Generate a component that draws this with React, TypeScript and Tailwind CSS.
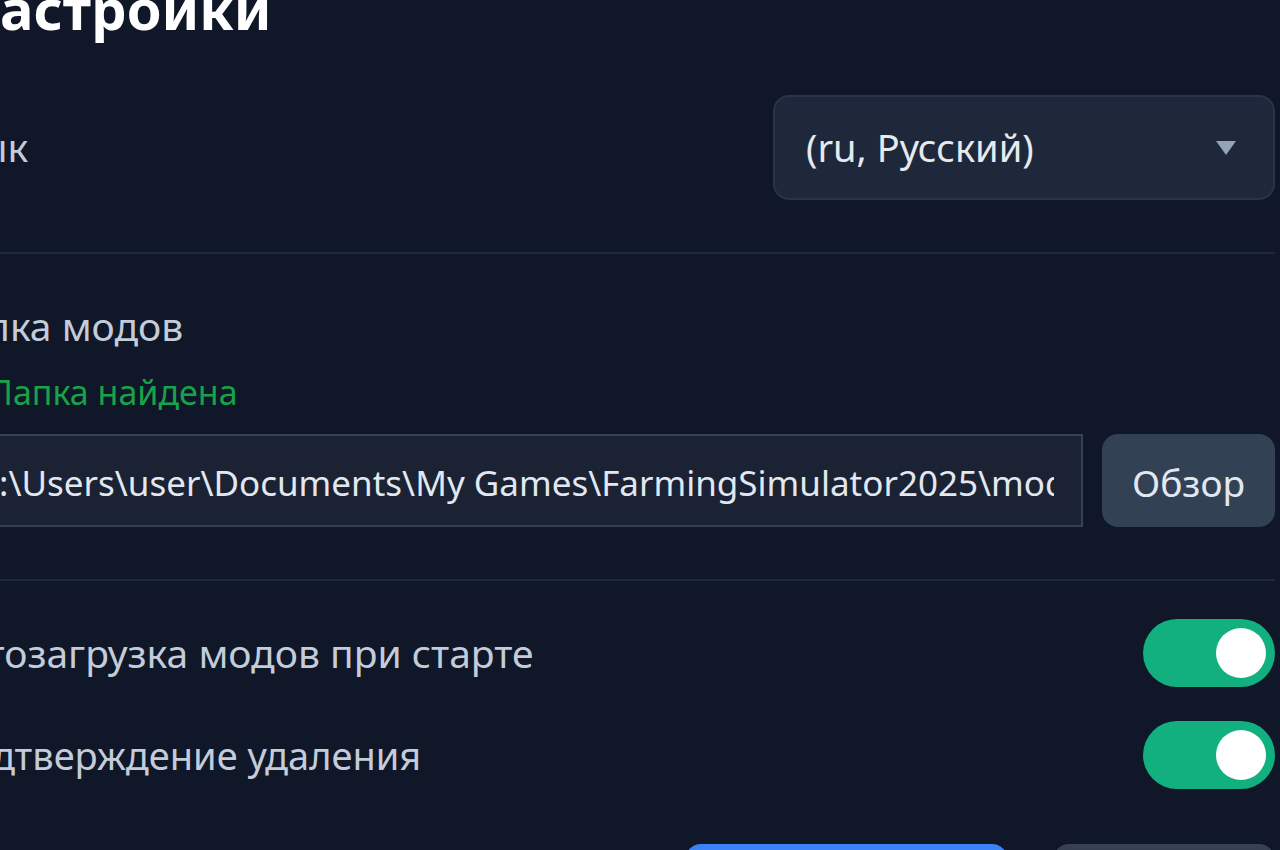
import { useState } from 'react';

const Toggle = ({ on, onChange }: { on: boolean; onChange: () => void }) => (
  <button
    onClick={onChange}
    className={`w-[132px] h-[68px] rounded-full flex items-center px-[9px] ${
      on ? 'bg-[#12b07e] justify-end' : 'bg-[#334155] justify-start'
    }`}
  >
    <span className="w-[50px] h-[50px] rounded-full bg-white" />
  </button>
);

const App = () => {
  const [autoLoad, setAutoLoad] = useState(true);
  const [confirmDelete, setConfirmDelete] = useState(true);

  return (
    <div
      className="w-[1280px] h-[850px] overflow-hidden bg-[#0f1729]"
      style={{ fontFamily: '"Noto Sans", "Open Sans", sans-serif' }}
    >
      <div className="ml-[-46px] w-[1321px]">
        <h1 className="mt-[-20px] ml-[3px] h-[58px] text-[56px] leading-none font-bold text-white">
          Настройки
        </h1>

        <div className="mt-[57px] h-[105px] flex items-center justify-between">
          <span className="ml-[-20px] text-[39px] text-[#c3ccd8]">Язык</span>
          <div className="w-[502px] h-[105px] rounded-[16px] bg-[#1e283a] border-2 border-[#29344a] flex items-center justify-between pl-[31px] pr-[36px]">
            <span className="text-[38px] text-[#e5e9f0]">(ru, Русский)</span>
            <svg width="22" height="16" viewBox="0 0 22 16">
              <path d="M1 1 L21 1 L11 15 Z" fill="#94a3b8" />
            </svg>
          </div>
        </div>

        <div className="mt-[52px] h-[2px] bg-[#1e293b]" />

        <div className="mt-[48px] ml-[-18px] text-[39px] leading-[48px] text-[#c3ccd8]">Папка модов</div>
        <div className="mt-[22px] pl-[34px] text-[34px] leading-[40px] text-[#16a34a]">
          Папка найдена
        </div>

        <div className="mt-[22px] flex gap-[19px] h-[93px]">
          <div className="flex-1 min-w-0 bg-[#1a2233] border-2 border-[#364156] flex items-center pl-[21px] pr-[27px] pt-[6px]">
            <span className="block overflow-hidden whitespace-nowrap text-[35px] text-[#e2e8f0]">
              C:\Users\user\Documents\My Games\FarmingSimulator2025\mods
            </span>
          </div>
          <button className="w-[173px] rounded-[16px] bg-[#334155] text-[37px] text-[#e2e8f0] pt-[4px]">
            Обзор
          </button>
        </div>

        <div className="mt-[52px] h-[2px] bg-[#1e293b]" />

        <div className="mt-[38px] h-[68px] flex items-center justify-between">
          <span className="ml-[-14px] text-[39px] text-[#c3ccd8]">Автозагрузка модов при старте</span>
          <Toggle on={autoLoad} onChange={() => setAutoLoad(!autoLoad)} />
        </div>
        <div className="mt-[34px] h-[68px] flex items-center justify-between">
          <span className="ml-[-12px] text-[38px] text-[#c3ccd8]">Подтверждение удаления</span>
          <Toggle on={confirmDelete} onChange={() => setConfirmDelete(!confirmDelete)} />
        </div>

        <div className="mt-[55px] flex justify-end gap-[45px]">
          <button className="w-[323px] h-[90px] rounded-[16px] bg-[#3b82f6] text-[36px] text-white">
            Сохранить
          </button>
          <button className="w-[222px] h-[90px] rounded-[16px] bg-[#374151] text-[36px] text-slate-200">
            Отмена
          </button>
        </div>
      </div>
    </div>
  );
};

export default App;
